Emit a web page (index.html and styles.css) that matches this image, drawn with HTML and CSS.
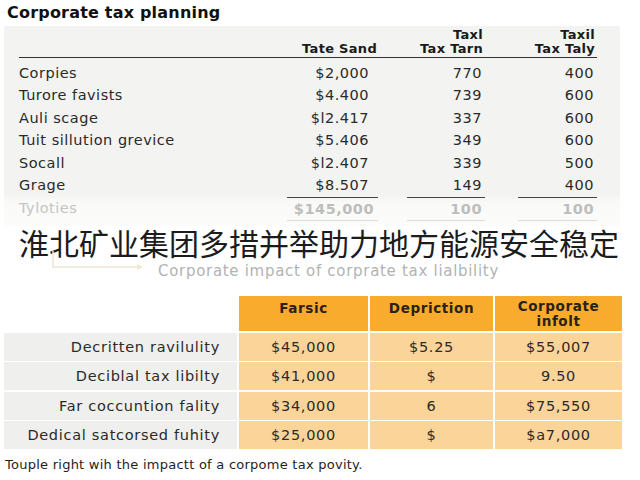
FILE: index.html
```html
<!DOCTYPE html>
<html>
<head>
<meta charset="utf-8">
<link rel="stylesheet" href="styles.css">
</head>
<body>
<h1 class="title">Corporate tax planning</h1>
<section class="panel">
  <div class="grid">
    <div class="h line"></div>
    <div class="h line"></div>
    <div class="h line r2">Tate Sand</div>
    <div class="h line"></div>
    <div class="h line r">Taxl<br>Tax Tarn</div>
    <div class="h line"></div>
    <div class="h line r">Taxil<br>Tax Taly</div>

    <div class="d lbl first">Corpies</div><div class="first"></div><div class="d v2 first">$2,000</div><div class="first"></div><div class="d v3 first">770</div><div class="first"></div><div class="d r first">400</div>
    <div class="d lbl">Turore favists</div><div></div><div class="d v2">$4.400</div><div></div><div class="d v3">739</div><div></div><div class="d r">600</div>
    <div class="d lbl">Auli scage</div><div></div><div class="d v2">$l2.417</div><div></div><div class="d v3">337</div><div></div><div class="d r">600</div>
    <div class="d lbl">Tuit sillution grevice</div><div></div><div class="d v2">$5.406</div><div></div><div class="d v3">349</div><div></div><div class="d r">600</div>
    <div class="d lbl">Socall</div><div></div><div class="d v2">$l2.407</div><div></div><div class="d v3">339</div><div></div><div class="d r">500</div>
    <div class="d lbl">Grage</div><div></div><div class="d v2">$8.507</div><div></div><div class="d v3">149</div><div></div><div class="d r">400</div>

    <div class="t lbl">Tyloties</div><div></div><div class="t v2 tl">$145,000</div><div></div><div class="t v3 tl">100</div><div></div><div class="t r tl">100</div>
  </div>
</section>
<h2 class="headline">淮北矿业集团多措并举助力地方能源安全稳定</h2>
<div class="caption">
  <svg class="arrow" width="100" height="30" viewBox="0 0 100 30"><path d="M2 2 V18 H90" fill="none" stroke="#f0e6d2" stroke-width="1.5"/><path d="M86 15 L92 18 L86 21 Z" fill="#f0e6d2"/></svg>
  <span>Corporate impact of corprate tax lialbility</span>
</div>
<section class="otable">
  <div class="oh blank"></div>
  <div class="oh">Farsic</div>
  <div class="oh">Depriction</div>
  <div class="oh two">Corporate<br>infolt</div>

  <div class="ol">Decritten ravilulity</div><div class="ov">$45,000</div><div class="ov">$5.25</div><div class="ov">$55,007</div>
  <div class="ol">Deciblal tax libilty</div><div class="ov">$41,000</div><div class="ov">$</div><div class="ov">9.50</div>
  <div class="ol">Far coccuntion fality</div><div class="ov">$34,000</div><div class="ov">6</div><div class="ov">$75,550</div>
  <div class="ol">Dedical satcorsed fuhity</div><div class="ov">$25,000</div><div class="ov">$</div><div class="ov">$a7,000</div>
</section>
<p class="foot">Touple right wih the impactt of a corpome tax povity.</p>
</body>
</html>
```
FILE: styles.css
```css
* { box-sizing: border-box; }
body {
  margin: 0;
  width: 640px;
  height: 480px;
  overflow: hidden;
  background: #fff;
  font-family: "DejaVu Sans", Verdana, sans-serif;
  color: #222;
}
.title {
  margin: 0;
  padding: 3px 0 0 7px;
  height: 26px;
  font-size: 16px;
  font-weight: bold;
  line-height: 19px;
  letter-spacing: 0.2px;
  color: #111;
}
.panel {
  margin: 0 20px 0 4px;
  padding: 2px 0 6px 15px;
  background: linear-gradient(to bottom, #f3f3f1 0%, #f3f3f1 84%, #f9f9f8 88%, #fcfcfb 100%);
  height: 200px;
}
.grid {
  display: grid;
  grid-template-columns: 193px 75px 91px 29px 78px 33px 79px;
  font-size: 14.5px;
  letter-spacing: 0.5px;
}
.h {
  font-weight: bold;
  font-size: 13px;
  letter-spacing: 0.3px;
  line-height: 14px;
  height: 30px;
  display: flex;
  flex-direction: column;
  justify-content: flex-end;
  padding-bottom: 1px;
  color: #1a1a1a;
}
.h.line { border-bottom: 1.5px solid #333; }
.h.r2 { text-align: right; padding-right: 1px; }
.h.r { text-align: right; padding-right: 2px; }
.d { height: 22.4px; line-height: 22.4px; color: #2a2a2a; }
.first { margin-top: 4px; }
.lbl { text-align: left; }
.v2 { text-align: right; padding-right: 9px; }
.v3 { text-align: right; padding-right: 3px; }
.r { text-align: right; padding-right: 3px; }
.t {
  height: 24px;
  line-height: 23px;
  margin-top: 1px;
  color: #bdbdbd;
  font-weight: bold;
}
.t.v2 { padding-right: 4px; }
.t.lbl { font-weight: normal; color: #c4c4c4; }
.tl {
  border-top: 1.5px solid #444;
  border-bottom: 1px solid #ddd;
}
.headline {
  margin: 0;
  padding-left: 19px;
  height: 32px;
  font-family: "Noto Sans CJK SC", sans-serif;
  font-weight: normal;
  font-size: 30px;
  line-height: 32px;
  color: #1c1c1c;
}
.caption {
  position: relative;
  height: 38px;
  padding-top: 3px;
  padding-left: 158px;
  font-size: 15px;
  letter-spacing: 0.7px;
  line-height: 20px;
  color: #b3b3b3;
}
.arrow {
  position: absolute;
  left: 51px;
  top: -9px;
}
.otable {
  display: grid;
  grid-template-columns: 233px 129px 123px 127px;
  grid-template-rows: 35px repeat(4, 28px);
  gap: 1.5px 2px;
  margin-left: 4px;
  width: 620px;
}
.oh {
  background: #f8ab2c;
  font-weight: bold;
  font-size: 13.5px;
  letter-spacing: 0.6px;
  color: #2a2118;
  text-align: center;
  padding-top: 5px;
  line-height: 15px;
}
.oh.two { padding-top: 3px; line-height: 15px; }
.oh.blank { background: #fff; }
.ol, .ov {
  font-size: 14.5px;
  letter-spacing: 0.7px;
  line-height: 28px;
  color: #2a2a2a;
}
.ol {
  background: #efefed;
  text-align: right;
  padding-right: 17px;
}
.ov {
  background: #fbd49a;
  text-align: center;
}
.foot {
  margin: 0;
  padding: 8px 0 0 5px;
  font-size: 13px;
  letter-spacing: 0.25px;
  color: #1e1e1e;
}
```
